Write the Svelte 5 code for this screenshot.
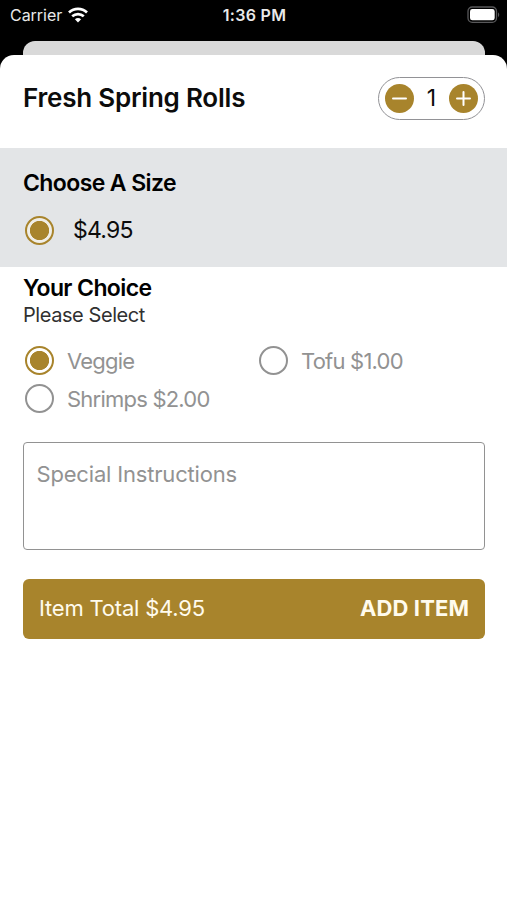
<script>
  let quantity = $state(1);
  let choice = $state('Veggie');
  const options = [
    { name: 'Veggie', label: 'Veggie' },
    { name: 'Tofu', label: 'Tofu $1.00' },
    { name: 'Shrimps', label: 'Shrimps $2.00' }
  ];
</script>

<div class="screen">
  <header class="status">
    <div class="carrier">
      <span>Carrier</span>
      <svg width="20" height="16" viewBox="0 0 20 16" fill="none" stroke="#fff" stroke-width="2.7">
        <path d="M1 5.5C6.2.6 13.8.6 19 5.5" />
        <path d="M4.2 9.3C7.6 6.3 12.4 6.3 15.8 9.3" />
        <path d="M10 15.4 6.9 12.2Q10 9.6 13.1 12.2Z" fill="#fff" stroke="none" />
      </svg>
    </div>
    <span class="time">1:36 PM</span>
    <svg class="battery" width="34" height="18" viewBox="0 0 34 18">
      <rect x="1" y="1" width="28.5" height="15.4" rx="4.3" fill="none" stroke="#58585a" stroke-width="1.3" />
      <rect x="3" y="3" width="24.7" height="11.3" rx="2.4" fill="#fff" />
      <path d="M31 6.2Q33.5 8.7 31 11.2Z" fill="#58585a" />
    </svg>
  </header>
  <div class="behind"></div>
  <main class="sheet">
    <section class="heading">
      <h1>Fresh Spring Rolls</h1>
      <div class="stepper">
        <button aria-label="Decrease" onclick={() => (quantity = Math.max(1, quantity - 1))}>
          <svg width="29" height="29" viewBox="0 0 29 29"><path d="M8 14.5H21" /></svg>
        </button>
        <span>{quantity}</span>
        <button aria-label="Increase" onclick={() => (quantity += 1)}>
          <svg width="29" height="29" viewBox="0 0 29 29"><path d="M8 14.5H21M14.5 8V21" /></svg>
        </button>
      </div>
    </section>

    <section class="size">
      <h2 class="choose">Choose A Size</h2>
      <div class="option">
        <span class="radio on"></span>
        <span class="price">$4.95</span>
      </div>
    </section>

    <section class="choices">
      <h2 class="your">Your Choice</h2>
      <p>Please Select</p>
      <div class="grid">
        {#each options as option}
          <button class="option" onclick={() => (choice = option.name)}>
            <span class="radio" class:on={choice === option.name}></span>
            <span class="label">{option.label}</span>
          </button>
        {/each}
      </div>
    </section>

    <div class="notes">Special Instructions</div>

    <button class="add">
      <span class="total">Item Total $4.95</span>
      <span class="action">ADD ITEM</span>
    </button>
  </main>
</div>

<style>
  :global(body) { background: #000; }
  .screen {
    width: 507px;
    height: 900px;
    display: flex;
    flex-direction: column;
    overflow: hidden;
    background: #000;
    color: #0c0c0c;
    font-family: Inter, "Liberation Sans", sans-serif;
  }
  * { box-sizing: border-box; }
  h1, h2, p { margin: 0; }
  span, h1, h2, p { white-space: nowrap; }
  button { border: 0; padding: 0; background: none; font: inherit; color: inherit; }
  svg { display: block; flex: none; }

  .status {
    flex: none;
    height: 41px;
    padding: 0 8px 11px 10px;
    display: grid;
    grid-template-columns: 1fr auto 1fr;
    align-items: center;
    color: #e9e9e9;
  }
  .carrier { display: flex; align-items: center; gap: 6px; font-size: 16px; letter-spacing: -0.03px; }
  .time { font-size: 16px; font-weight: 600; letter-spacing: 0.3px; }
  .battery { justify-self: end; margin-right: -2px; }
  .behind {
    flex: none;
    height: 14px;
    margin: 0 22px 0 23px;
    background: #d9d9d9;
    border-radius: 12px 12px 0 0;
  }
  .sheet {
    flex: 1;
    background: #fff;
    border-radius: 14px 14px 0 0;
    display: flex;
    flex-direction: column;
  }
  .heading {
    height: 93px;
    padding: 0 22px 7px 23px;
    display: flex;
    align-items: center;
    justify-content: space-between;
  }
  h1 { font-size: 26px; line-height: 32px; font-weight: 600; letter-spacing: -0.22px; }
  .stepper {
    width: 107px;
    height: 43px;
    padding: 0 6px;
    border: 1.5px solid #929296;
    border-radius: 22px;
    display: flex;
    align-items: center;
    justify-content: space-between;
    font-size: 23px;
  }
  .stepper button { width: 29px; height: 29px; border-radius: 50%; background: #a8842c; }
  .stepper path { stroke: #fff; stroke-width: 2; stroke-linecap: round; }

  .size { height: 119px; padding: 20px 24px 0 23px; background: #e3e5e7; }
  h2 { font-size: 23px; line-height: 30px; font-weight: 600; color: #000; }
  .choose { letter-spacing: -0.6px; }
  .your { letter-spacing: -0.62px; }
  .option { display: flex; align-items: center; text-align: left; padding-left: 1.5px; }
  .size .option { margin-top: 17px; height: 30px; gap: 19.5px; }
  .price { font-size: 23px; letter-spacing: -0.75px; }
  .radio {
    flex: none;
    width: 29px;
    height: 29px;
    border: 2px solid #929292;
    border-radius: 50%;
    background: #fff;
  }
  .radio.on { border-color: #a8842c; background: radial-gradient(circle, #a8842c 9.2px, #fff 10px); }
  .size .radio.on { background: radial-gradient(circle, #a8842c 9.2px, #f0eee7 10px); }

  .choices { padding: 6px 23px 0; }
  p { font-size: 20px; line-height: 24px; color: #303030; letter-spacing: -0.43px; }
  .grid { margin-top: 14.5px; display: grid; grid-template-columns: 234px 1fr; grid-auto-rows: 38px; }
  .grid .option { gap: 13.5px; color: #929292; font-size: 22px; }
  .label { letter-spacing: -0.78px; }

  .notes {
    margin: 24.5px 22px 0 23px;
    height: 108px;
    padding: 17px 12.5px;
    border: 1.5px solid #929292;
    border-radius: 4px;
    color: #929292;
    font-size: 22px;
    line-height: 28px;
    letter-spacing: -0.18px;
  }
  .add {
    margin: 28.5px 22px 0 23px;
    height: 60px;
    padding: 0 16px 1px;
    border-radius: 6px;
    background: #a8842c;
    color: #fffbed;
    display: flex;
    align-items: center;
    justify-content: space-between;
    font-size: 22px;
  }
  .total { letter-spacing: -0.2px; }
  .action { font-weight: 700; letter-spacing: 0.1px; }
</style>
